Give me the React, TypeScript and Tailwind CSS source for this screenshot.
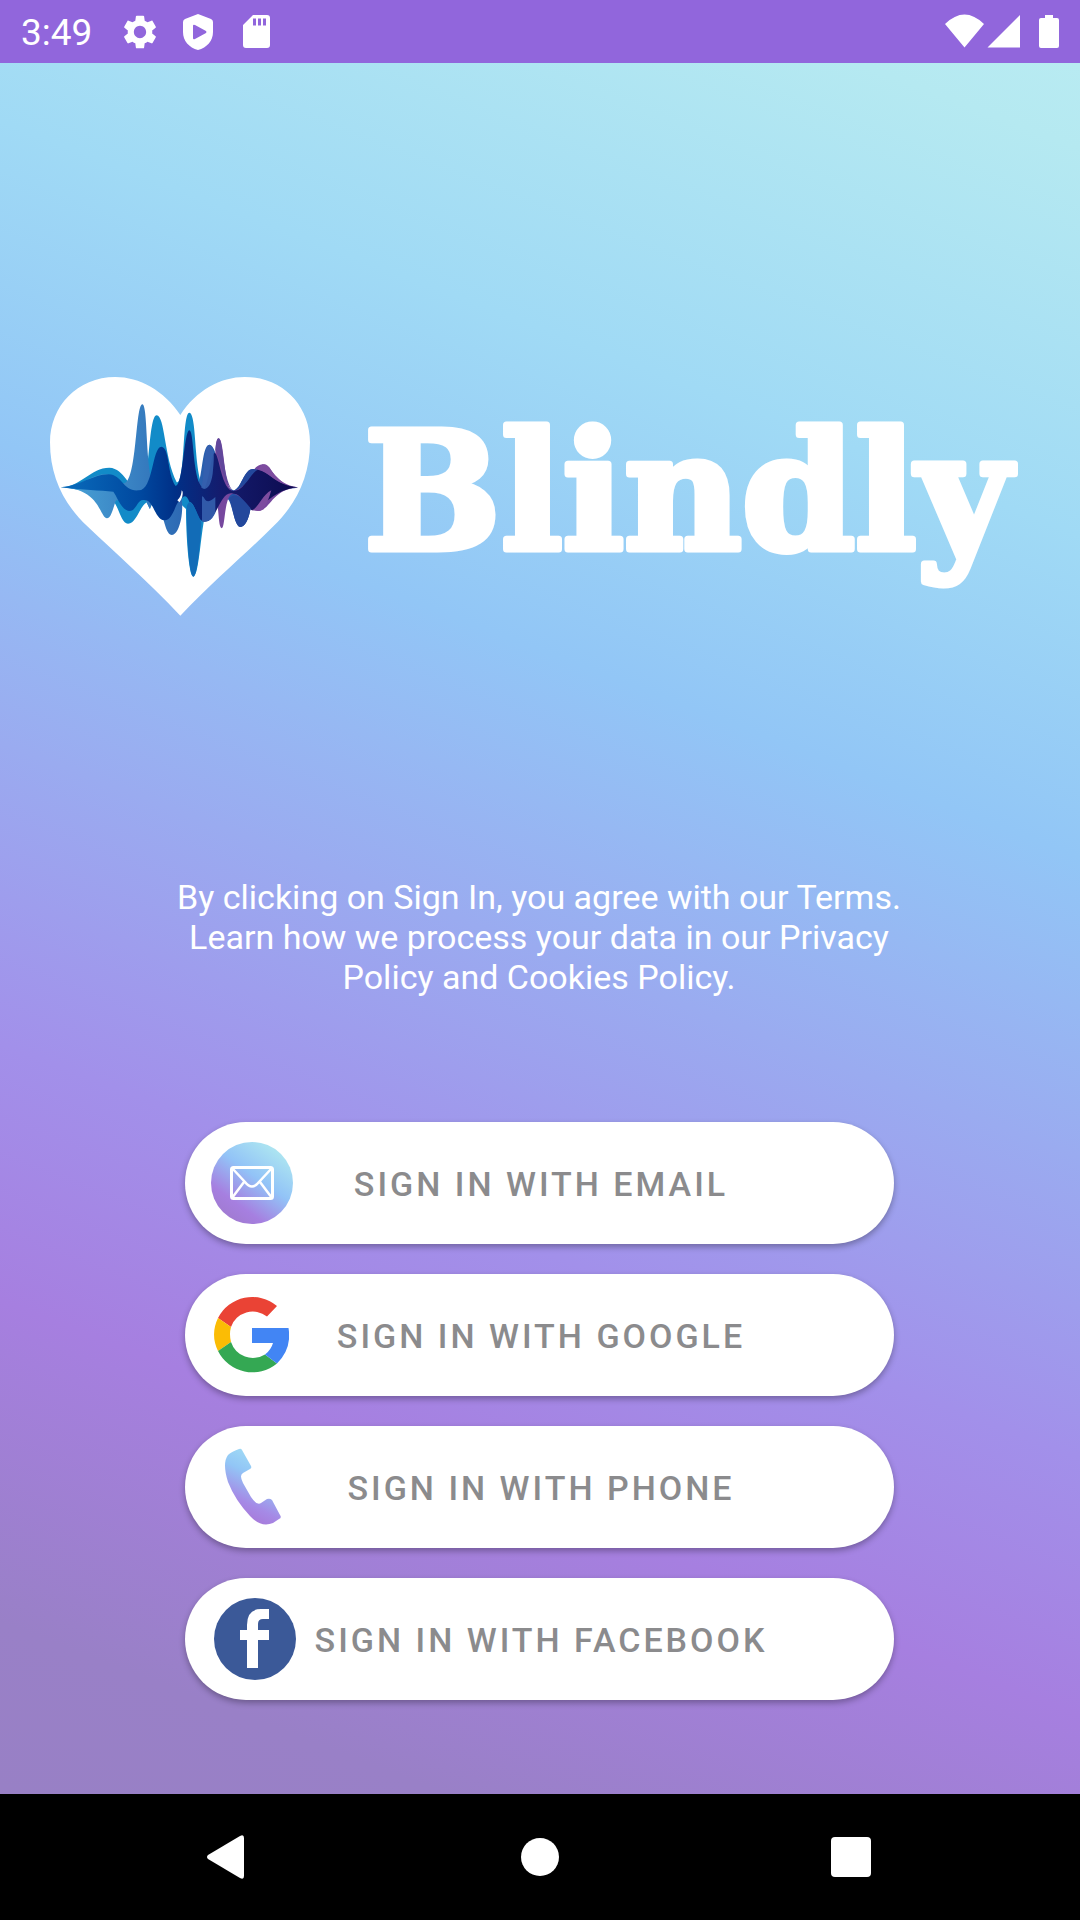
import React from "react";

function StatusBar() {
  return (
    <header className="flex h-[63px] items-center bg-[#9166DC] pl-[21px] pr-5 text-white">
      <span className="w-[74px] pt-[2px] text-[37px] leading-none">3:49</span>
      <svg className="ml-[23px] h-11 w-11" viewBox="0 0 24 24" fill="currentColor" aria-hidden="true">
        <path d="M19.14 12.94c.04-.3.06-.61.06-.94 0-.32-.02-.64-.07-.94l2.03-1.58c.18-.14.23-.41.12-.61l-1.92-3.32c-.12-.22-.37-.29-.59-.22l-2.39.96c-.5-.38-1.03-.7-1.62-.94l-.36-2.54c-.04-.24-.24-.41-.48-.41h-3.84c-.24 0-.43.17-.47.41l-.36 2.54c-.59.24-1.13.57-1.62.94l-2.39-.96c-.22-.08-.47 0-.59.22L2.74 8.87c-.12.21-.08.47.12.61l2.03 1.58c-.05.3-.09.63-.09.94s.02.64.07.94l-2.03 1.58c-.18.14-.23.41-.12.61l1.92 3.32c.12.22.37.29.59.22l2.39-.96c.5.38 1.03.7 1.62.94l.36 2.54c.05.24.24.41.48.41h3.84c.24 0 .44-.17.47-.41l.36-2.54c.59-.24 1.13-.56 1.62-.94l2.39.96c.22.08.47 0 .59-.22l1.92-3.32c.12-.22.07-.47-.12-.61l-2.01-1.58zM12 15.600c-1.980 0-3.600-1.620-3.600-3.600s1.620-3.600 3.600-3.600 3.600 1.620 3.600 3.600-1.620 3.600-3.600 3.600z" transform="translate(12 12) scale(.93) translate(-12 -12)" />
      </svg>
      <svg className="ml-[21px] h-9 w-[30px]" viewBox="0 0 30 36" fill="currentColor" aria-hidden="true">
        <path fillRule="evenodd" d="M15 0 28 5Q30 6 30 8V18C30 27 24 33.500 15 36 6 33.500 0 27 0 18V8Q0 6 2 5ZM10 12V24Q10 26 12 25L23 19Q24 18 23 17L12 11Q10 10 10 12Z" />
      </svg>
      <svg className="ml-[30px] h-[33px] w-[27px]" viewBox="0 0 27 33" fill="currentColor" aria-hidden="true">
        <path fillRule="evenodd" d="M10 0H24Q27 0 27 3V30Q27 33 24 33H3Q0 33 0 30V10ZM10 3.500V10.500H13V3.500ZM15 3.500V10.500H18V3.500ZM20 3.500V10.500H23V3.500Z" />
      </svg>
      <svg className="ml-auto h-9 w-[115px]" viewBox="0 0 115 36" fill="currentColor" aria-hidden="true">
        <path d="M0 10Q19.500-9 39 10L19.500 33.500ZM75 1V33.500H42.500ZM100 1H108V4H112Q114 4 114 6V32Q114 34 112 34H96Q94 34 94 32V6Q94 4 96 4H100Z" />
      </svg>
    </header>
  );
}

function HeartLogo() {
  return (
    <svg className="w-[260px] shrink-0" viewBox="0 0 780 716" aria-hidden="true">
      <defs>
        <linearGradient id="core" x1="70" x2="745" gradientUnits="userSpaceOnUse" y1="0" y2="0">
          <stop offset="0" stopColor="#0867B8" />
          <stop offset=".3" stopColor="#00489F" />
          <stop offset=".45" stopColor="#003087" />
          <stop offset=".65" stopColor="#141C6E" />
          <stop offset="1" stopColor="#0D0B4F" />
        </linearGradient>
        <linearGradient id="mist" x1="30" x2="745" gradientUnits="userSpaceOnUse" y1="0" y2="0">
          <stop offset="0" stopColor="#4BA6D8" />
          <stop offset=".45" stopColor="#3070B8" />
          <stop offset=".8" stopColor="#2049A0" />
          <stop offset="1" stopColor="#2049A0" />
        </linearGradient>
      </defs>
      <path fill="#fff" d="M391 114C342 40 268 0 196 0 82 0 0 88 0 196 0 300 42 382 112 448 192 524 292 612 391 716 490 612 592 526 670 448 738 382 780 300 780 196 780 88 700 0 584 0 512 0 438 40 391 114Z" />
      <g fill="#128BC8">
        <path d="M32 331C92 330 122 272 178 272 226 274 234 340 272 338L300 372C270 376 262 440 234 440 210 440 205 372 180 366 130 350 80 334 32 331Z" />
        <path d="M272 338C300 330 294 116 320 115 345 116 342 240 380 316 406 322 396 108 418 107 442 110 430 290 462 334V430C450 500 445 598 430 599 416 598 408 470 408 396L380 370 340 430C324 420 318 390 310 370L300 396 284 366Z" />
      </g>
      <path fill="url(#mist)" d="M62 334C130 300 170 270 210 314 262 360 254 82 277 82 298 84 280 350 330 344L394 350C404 420 384 474 366 474 342 474 344 398 310 370L299 396 286 366C250 340 220 370 198 370 190 390 184 424 171 424 150 422 152 350 62 334ZM430 340C460 334 452 204 478 203 504 204 506 320 550 340 576 336 580 276 610 276 650 280 670 326 744 332 660 340 610 340 602 392 596 430 584 450 571 450 550 448 548 370 530 364L500 390C488 430 476 436 460 432Z" />
      <path fill="#76479E" d="M488 300C500 250 492 184 506 184 524 186 520 334 548 342 590 336 604 262 638 262 668 264 670 322 744 331 664 338 662 400 625 402 590 398 580 352 548 350 522 356 526 454 515 454 502 450 510 370 490 350Z" />
      <path fill="url(#core)" d="M32 331C92 326 130 292 176 292 218 294 218 344 266 340 310 340 306 210 334 209 360 214 350 284 376 326 398 336 402 160 418 160 434 162 426 326 464 334 480 300 484 228 494 228 508 230 514 344 552 342 590 340 594 280 624 278 656 280 672 324 744 331 664 338 636 400 606 400 588 392 574 348 550 350 510 336 502 434 464 434 438 434 440 380 418 374 404 336 390 376 384 376 374 390 366 430 344 430 316 430 310 370 286 370 260 362 262 402 238 402 214 400 200 356 190 344 150 340 100 340 32 331Z" />
      <path fill="#355FAE" fillOpacity=".9" d="M454 332C464 300 460 204 478 203 496 206 492 250 488 290 484 320 474 336 462 336ZM456 358C466 358 464 390 496 360V408C484 434 472 434 456 434Z" />
      <path fill="#61479B" d="M496 218C500 190 502 184 506 184 520 186 518 300 546 338 520 316 508 240 496 218Z" />
      <path fill="#23489C" d="M538 364C552 348 570 352 602 394 596 430 584 450 571 450 554 448 548 390 538 364ZM552 340C574 336 580 276 610 276L624 278C604 284 590 334 552 340Z" />
      <path fill="#7D4C9F" d="M624 278C632 258 650 254 664 280 672 294 690 310 704 320 676 314 656 286 624 278ZM606 400C626 392 636 354 664 340 656 366 646 402 625 402Z" />
      <path fill="#126CB7" d="M410 390C418 360 430 380 454 436 450 520 440 598 430 599 416 598 410 460 410 390Z" />
      <path fill="#fff" d="M382 370Q394 360 395 340L398 344Q400 360 388 376Z" />
    </svg>
  );
}

function Wordmark() {
  return (
    <svg className="mt-2 w-[668px] overflow-visible" viewBox="0 0 668 220" role="img" aria-label="Blindly">
      <text
        x="4"
        y="164"
        fill="#fff"
        stroke="#fff"
        strokeWidth="7"
        strokeLinejoin="round"
        className="font-['DejaVu_Serif',serif] text-[162px] font-bold"
      >
        Blindly
      </text>
    </svg>
  );
}

function EmailIcon() {
  return (
    <svg className="h-[82px] w-[82px]" viewBox="0 0 82 82" aria-hidden="true">
      <defs>
        <linearGradient id="mailFill" x1="18" y1="76" x2="66" y2="10" gradientUnits="userSpaceOnUse">
          <stop offset="0" stopColor="#A17BD2" />
          <stop offset=".2" stopColor="#A67FE0" />
          <stop offset=".6" stopColor="#92C3F7" />
          <stop offset="1" stopColor="#ABE3F1" />
        </linearGradient>
      </defs>
      <circle cx="41" cy="41" r="41" fill="url(#mailFill)" />
      <g fill="none" stroke="#fff" strokeWidth="3">
        <rect x="20.500" y="25.500" width="41" height="31" rx="2" />
        <path d="M21 26 34 40Q41 49 48 40L61 26M21 56 33 40M61 56 49 40" strokeWidth="2.500" />
      </g>
    </svg>
  );
}

function GoogleIcon() {
  return (
    <svg className="h-[77px] w-[75px]" viewBox="0 0 75 77" aria-hidden="true">
      <path fill="#EA4335" d="M4 22A38.500 38.500 0 0 1 63 10L53 20.500A23 23 0 0 0 17 31Z" />
      <path fill="#FBBC05" d="M4 22A38 38 0 0 0 4 55L17 46Q15 38 17 31Z" />
      <path fill="#34A853" d="M4 55A38.500 38.500 0 0 0 63 67.500L51 58.500A23 23 0 0 1 17 46Z" />
      <path fill="#4285F4" d="M38 32H74.500Q78 53 63 67.500L51 58.500Q57 54 59 47H38Z" />
    </svg>
  );
}

function PhoneIcon() {
  return (
    <svg className="h-[77px] w-[56px]" viewBox="0 0 56 77" aria-hidden="true">
      <defs>
        <linearGradient id="phoneFill" x1="15" y1="65" x2="42" y2="10" gradientUnits="userSpaceOnUse">
          <stop offset="0" stopColor="#A77DDC" />
          <stop offset=".2" stopColor="#A58AE6" />
          <stop offset=".65" stopColor="#92C6F6" />
          <stop offset="1" stopColor="#A0DBF5" />
        </linearGradient>
      </defs>
      <path fill="url(#phoneFill)" d="M14 1Q16 0 17 2L26 18Q27 20 25 21L18 25Q14 27 18 35L26 49Q32 58 36 55L42 51Q45 50 47 52L55 67Q57 70 54 71L48 75Q36 80 25 68 10 52 3 34-3 15 3 7 6 4 14 1Z" />
    </svg>
  );
}

function FacebookIcon() {
  return (
    <svg className="h-[82px] w-[82px]" viewBox="0 0 82 82" aria-hidden="true">
      <circle cx="41" cy="41" r="41" fill="#3B5998" />
      <path fill="#fff" d="M33 70V42H26V32H33V27Q33 11 47 11H55V21H49Q44 21 44 26V32H55V42H44V70Z" />
    </svg>
  );
}

const methods = [
  { label: "Sign in with email", icon: <EmailIcon />, inset: "pl-[26px]" },
  { label: "Sign in with Google", icon: <GoogleIcon />, inset: "pl-[29px]" },
  { label: "Sign in with phone", icon: <PhoneIcon />, inset: "pl-10" },
  { label: "Sign in with Facebook", icon: <FacebookIcon />, inset: "pl-[29px]" },
];

function NavBar() {
  return (
    <nav className="flex h-[126px] items-center justify-center gap-[220px] bg-black text-white" aria-label="System">
      <button aria-label="Back" className="flex w-[92px] justify-center pr-1">
        <svg className="h-[44px] w-[38px]" viewBox="0 0 38 44" fill="currentColor">
          <path d="M33 1Q37-1 37 3V41Q37 45 33 43L1 24Q-1 22 1 20Z" />
        </svg>
      </button>
      <button aria-label="Home" className="flex w-[92px] justify-center">
        <span className="h-[38px] w-[38px] rounded-full bg-white" />
      </button>
      <button aria-label="Recent apps" className="flex w-[92px] justify-center pr-[2px]">
        <span className="h-10 w-10 rounded bg-white" />
      </button>
    </nav>
  );
}

export default function App() {
  return (
    <div className="flex min-h-screen flex-col font-['Roboto',sans-serif]">
      <StatusBar />
      <main className="flex grow flex-col items-center bg-[linear-gradient(21deg,#9880C5_0%,#9980C7_8%,#A67FE0_23%,#A290EA_35%,#92C6F6_63%,#A0DAF5_78%,#B5E9F1_96%,#B8EBF2_100%)] pr-[2px] pt-[314px]">
        <h1 className="flex w-full items-start justify-center gap-[50px] text-white">
          <HeartLogo />
          <Wordmark />
        </h1>
        <p className="mt-[261px] w-[740px] text-center text-[34px] leading-10 text-white">
          By clicking on Sign In, you agree with our Terms. Learn how we process your data in our Privacy Policy and Cookies Policy.
        </p>
        <div className="mt-[125px] flex w-[709px] flex-col gap-[30px] pb-[94px]">
          {methods.map((m) => (
            <button
              key={m.label}
              className="relative h-[122px] w-full rounded-full bg-white pl-1 pt-1 text-[34px] font-medium uppercase tracking-[3px] text-[#8B8B8D] shadow-[0_3px_6px_rgba(0,0,0,0.3)]"
            >
              <span className={"absolute inset-y-0 left-0 flex items-center " + m.inset}>{m.icon}</span>
              {m.label}
            </button>
          ))}
        </div>
      </main>
      <NavBar />
    </div>
  );
}
